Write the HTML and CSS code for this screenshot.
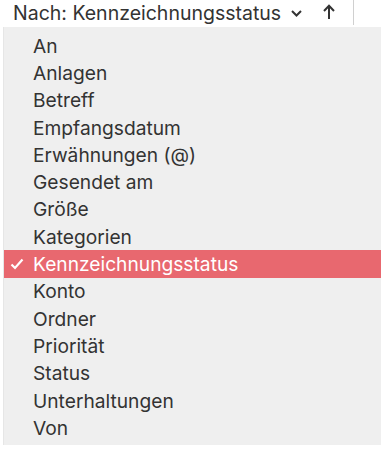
FILE: index.html
```html
<html>
<head>
<link rel="stylesheet" href="styles.css">
</head>
<body>
	<div class="toolbar">
		<div class="sort_label">Nach: Kennzeichnungsstatus</div>
		<svg class="chevron" width="11" height="7" viewBox="0 0 11 7"><polyline points="1,1 5.5,5.5 10,1" fill="none" stroke="#333" stroke-width="2"/></svg>
		<svg class="arrow" width="12" height="15" viewBox="0 0 12 15"><line x1="6" y1="2" x2="6" y2="15" stroke="#333" stroke-width="2"/><polyline points="1,7 6,1.8 11,7" fill="none" stroke="#333" stroke-width="2"/></svg>
		<div class="divider"></div>
	</div>
	<div class="menu">
		<div class="menu_item">An</div>
		<div class="menu_item">Anlagen</div>
		<div class="menu_item">Betreff</div>
		<div class="menu_item">Empfangsdatum</div>
		<div class="menu_item">Erwähnungen (@)</div>
		<div class="menu_item">Gesendet am</div>
		<div class="menu_item">Größe</div>
		<div class="menu_item">Kategorien</div>
		<div class="menu_item selected">
			<svg class="check" width="14" height="12" viewBox="0 0 14 12"><polyline points="1.5,6.5 5,10 12.5,1.5" fill="none" stroke="#fff" stroke-width="2.2"/></svg>
			Kennzeichnungsstatus
		</div>
		<div class="menu_item">Konto</div>
		<div class="menu_item">Ordner</div>
		<div class="menu_item">Priorität</div>
		<div class="menu_item">Status</div>
		<div class="menu_item">Unterhaltungen</div>
		<div class="menu_item">Von</div>
	</div>
</body>
</html>
```

FILE: styles.css
```css
*
{
	font-family: Inter, "Liberation Sans", sans-serif;
	box-sizing: border-box;
}

body
{
	margin: 0;
	padding: 0;
	background: #fff;
	width: 385px;
	height: 452px;
	overflow: hidden;
}

.toolbar
{
	display: flex;
	align-items: center;
	height: 27px;
	padding-left: 13px;
}

.sort_label
{
	font-size: 19.5px;
	color: #333;
	margin-top: -2px;
}

.chevron
{
	margin-left: 10px;
	margin-top: -1px;
}

.arrow
{
	margin-left: 21px;
	margin-top: -4px;
}

.divider
{
	width: 1px;
	height: 25px;
	background: #d0d0d0;
	margin-left: 18px;
	align-self: flex-start;
}

.menu
{
	margin-left: 3px;
	width: 378px;
	background: #efefef;
	padding: 5px 0 4px 0;
	border-left: 1px solid #e6e6e6;
}

.menu_item
{
	display: flex;
	align-items: center;
	height: 27.3px;
	padding-left: 29px;
	font-size: 19.2px;
	color: #333;
	position: relative;
}

.menu_item.selected
{
	background: #e8686f;
	color: #fff;
}

.check
{
	position: absolute;
	left: 6px;
	top: 8px;
}
```
